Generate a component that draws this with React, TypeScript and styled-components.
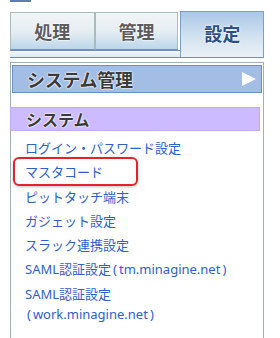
import React from "react";
import styled, { createGlobalStyle } from "styled-components";

const GlobalStyle = createGlobalStyle`
  body {
    margin: 0;
    background: #ffffff;
    font-family: "Noto Sans CJK JP", "Noto Sans", sans-serif;
  }
`;

const Page = styled.div`
  width: 280px;
  height: 338px;
  overflow: hidden;
  padding-left: 10px;
  box-sizing: border-box;
`;

const TopMark = styled.div`
  width: 21px;
  height: 2px;
  background: #5a7db3;
`;

const TabRow = styled.div`
  display: flex;
  align-items: flex-end;
  height: 39px;
  margin-top: 9px;
  width: 254px;
`;

const Tab = styled.div<{ $active?: boolean; $w: number }>`
  box-sizing: border-box;
  width: ${(p) => p.$w}px;
  height: ${(p) => (p.$active ? 46 : 38)}px;
  margin-bottom: ${(p) => (p.$active ? -7 : 0)}px;
  margin-left: ${(p) => (p.$active ? 2 : 0)}px;
  position: relative;
  z-index: ${(p) => (p.$active ? 1 : 0)};
  border: 1px solid ${(p) => (p.$active ? "#7f9ccb" : "#a9bcbc")};
  border-bottom: ${(p) => (p.$active ? "none" : "1px solid #6d8fc2")};
  background: ${(p) =>
    p.$active
      ? "linear-gradient(to bottom, #a9c7e6 0%, #d3e2f0 55%, #eaf1f7 100%)"
      : "linear-gradient(to bottom, #f2f5f6 0%, #e6eef2 50%, #bcd6ea 100%)"};
  display: flex;
  justify-content: center;
  align-items: ${(p) => (p.$active ? "flex-start" : "center")};
  padding-top: ${(p) => (p.$active ? 11 : 0)}px;
  font-size: 18px;
  font-weight: 700;
  line-height: 20px;
  color: ${(p) => (p.$active ? "#2d4f88" : "#5c5c5c")};
  text-shadow: 0 0 2px #fff, 0 0 2px #fff;
`;

const TabStrip = styled.div`
  width: 254px;
  height: 6px;
  border-top: 1px solid #6d8fc2;
  border-bottom: 1px solid #6d8fc2;
  background: linear-gradient(to bottom, #f6f9fb, #dce8f1);
`;

const Panel = styled.div`
  margin-top: 4px;
  width: 254px;
  box-sizing: border-box;
  border: 1px solid #9fb1b1;
  border-bottom: none;
  padding-top: 2px;
  height: 290px;
`;

const SectionHeader = styled.div`
  margin: 0 1px;
  height: 28px;
  box-sizing: border-box;
  background: #a3bde4;
  border: 1px solid #6b90c2;
  display: flex;
  align-items: center;
  justify-content: space-between;
  padding: 0 5px 0 14px;
  font-size: 18px;
  font-weight: 700;
  color: #3a3a3a;
  letter-spacing: -0.3px;
  text-shadow: 0 0 2px #fff, 0 0 2px #fff, 0 0 1px #fff;
`;

const Arrow = styled.div`
  width: 0;
  height: 0;
  border-top: 7px solid transparent;
  border-bottom: 7px solid transparent;
  border-left: 14px solid #ffffff;
`;

const GroupHeader = styled.div`
  margin: 14px 0 0 -1px;
  width: 250px;
  height: 24px;
  box-sizing: border-box;
  background: #ccbcff;
  border: 1px solid #c2aaf4;
  display: flex;
  align-items: center;
  padding-left: 15px;
  font-size: 16px;
  font-weight: 700;
  color: #3a3a3a;
  text-shadow: 0 0 2px #fff, 0 0 2px #fff, 0 0 1px #fff;
`;

const List = styled.ul`
  list-style: none;
  margin: 5px 0 0;
  padding: 0;
`;

const Item = styled.li`
  position: relative;
  padding: 2px 0 2px 14px;
  font-family: "Noto Sans", "Noto Sans CJK JP", sans-serif;
  font-size: 13px;
  line-height: 20.3px;
  color: #2f60cf;
`;

const Paren = styled.span`
  margin: 0 2px;
`;

const Highlight = styled.span`
  position: absolute;
  left: 2px;
  top: -3px;
  width: 125px;
  height: 29px;
  box-sizing: border-box;
  border: 2px solid #e3222b;
  border-radius: 6px;
  box-shadow: 0 1px 3px rgba(0, 0, 0, 0.25);
`;

type Entry = { label: string; host?: string; wrap?: boolean; marked?: boolean };

const items: Entry[] = [
  { label: "ログイン・パスワード設定" },
  { label: "マスタコード", marked: true },
  { label: "ピットタッチ端末" },
  { label: "ガジェット設定" },
  { label: "スラック連携設定" },
  { label: "SAML認証設定", host: "tm.minagine.net" },
  { label: "SAML認証設定", host: "work.minagine.net", wrap: true },
];

export default function App() {
  return (
    <Page>
      <GlobalStyle />
      <TopMark />
      <TabRow>
        <Tab $w={85}>処理</Tab>
        <Tab $w={84}>管理</Tab>
        <Tab $w={84} $active>
          設定
        </Tab>
      </TabRow>
      <TabStrip />
      <Panel>
        <SectionHeader>
          <span>システム管理</span>
          <Arrow />
        </SectionHeader>
        <GroupHeader>システム</GroupHeader>
        <List>
          {items.map((it, i) => (
            <Item key={i}>
              {it.label}
              {it.wrap && <br />}
              {it.host && (
                <>
                  <Paren>(</Paren>
                  {it.host}
                  <Paren>)</Paren>
                </>
              )}
              {it.marked && <Highlight />}
            </Item>
          ))}
        </List>
        <GroupHeader />
      </Panel>
    </Page>
  );
}
